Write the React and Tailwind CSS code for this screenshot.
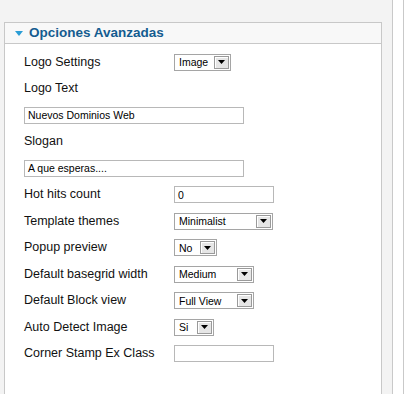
import React from 'react';

const Select = ({ value, width }) => (
  <div className={`flex h-[17px] items-center border border-[#a5a5a5] bg-white ${width}`}>
    <span className="flex-1 pl-[4px] text-[10.5px] leading-none text-black">{value}</span>
    <span className="m-[1px] flex h-[13px] w-[15px] items-center justify-center border border-[#9a9a9a] bg-[#e6e6e6] shadow-[inset_1px_1px_0_#fff]">
      <svg width="7" height="4" viewBox="0 0 7 4">
        <path d="M0 0h7L3.5 4z" fill="#000" />
      </svg>
    </span>
  </div>
);

const TextInput = ({ value = '', width }) => (
  <div className={`flex h-[17px] items-center border border-[#b8b8b8] bg-white pl-[3px] text-[10.5px] leading-none text-black ${width}`}>
    {value}
  </div>
);

const Row = ({ label, children }) => (
  <div className="flex h-[26.5px] items-center">
    <span className="w-[150px] text-[12.5px] text-[#111]">{label}</span>
    {children}
  </div>
);

const App = () => {
  return (
    <div className="flex h-[394px] w-[404px] overflow-hidden font-['Liberation_Sans',Arial,sans-serif]">
      <div className="h-full w-[393px] border-r border-[#c9c9c9] bg-[#f3f3f3] pt-[22px] pl-[4px] pr-[10px]">
        <div className="h-[400px] border border-[#c8c8c8] bg-white">
          <div className="flex h-[21px] items-center gap-[6px] border-b border-[#c8c8c8] bg-[#f8f8f8] pl-[10px]">
            <svg width="8" height="5" viewBox="0 0 8 5">
              <path d="M0 0h8L4 5z" fill="#2a9dd5" />
            </svg>
            <span className="text-[13.5px] font-bold text-[#145c90]">Opciones Avanzadas</span>
          </div>

          <div className="pt-[5px] pl-[19px]">
            <Row label="Logo Settings">
              <Select value="Image" width="w-[57px]" />
            </Row>
            <Row label="Logo Text" />
            <div className="flex h-[26.5px] items-center">
              <TextInput value="Nuevos Dominios Web" width="w-[220px]" />
            </div>
            <Row label="Slogan" />
            <div className="flex h-[26.5px] items-center">
              <TextInput value="A que esperas...." width="w-[220px]" />
            </div>
            <Row label="Hot hits count">
              <TextInput value="0" width="w-[100px]" />
            </Row>
            <Row label="Template themes">
              <Select value="Minimalist" width="w-[99px]" />
            </Row>
            <Row label="Popup preview">
              <Select value="No" width="w-[43px]" />
            </Row>
            <Row label="Default basegrid width">
              <Select value="Medium" width="w-[80px]" />
            </Row>
            <Row label="Default Block view">
              <Select value="Full View" width="w-[80px]" />
            </Row>
            <Row label="Auto Detect Image">
              <Select value="Si" width="w-[40px]" />
            </Row>
            <Row label="Corner Stamp Ex Class">
              <TextInput width="w-[100px]" />
            </Row>
          </div>
        </div>
      </div>
      <div className="h-full w-[11px] border-r border-[#c9c9c9] bg-white" />
    </div>
  );
};

export default App;
